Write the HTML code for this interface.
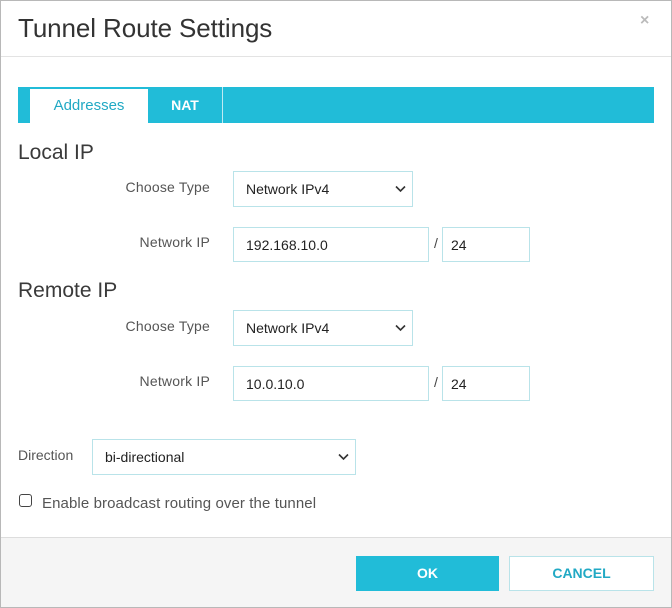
<!DOCTYPE html>
<html><head><style>
*{box-sizing:border-box;margin:0;padding:0}
body{width:672px;height:608px;background:#fff;font-family:"Liberation Sans",sans-serif;position:relative;overflow:hidden}
.frame{position:absolute;left:0;top:0;width:672px;height:608px;border:1px solid #b8b8b8}
.abs{position:absolute}
.title{left:18px;top:13px;font-size:26px;color:#333;font-weight:normal;letter-spacing:-0.1px}
.x{left:640px;top:12px;font-size:16px;color:#bbb;font-weight:bold}
.hr{left:1px;width:670px;height:1px;background:#e3e3e3}
.bar{left:18px;top:87px;width:636px;height:36px;background:#21bcd8}
.tab1{left:30px;top:87px;width:118px;height:36px;background:#fff;border-top:2px solid #21bcd8;color:#21a9c4;font-size:15px;text-align:center;line-height:34px}
.tab2{left:148px;top:87px;width:75px;height:36px;color:#fff;font-size:14px;font-weight:bold;text-align:center;line-height:36px;border-right:1px solid #bfeaf3}
.h{font-size:21px;color:#3a3a3a;left:18px}
.lbl{font-size:14px;color:#555;text-align:right;width:110px;left:100px;letter-spacing:0.2px}
.box{border:1px solid #b9e3e9;background:#fff;font-size:14px;color:#222;padding-left:12px;line-height:34px}
.chev{position:absolute;right:6px;top:13px}
</style></head><body>
<div class="frame"></div>
<div class="abs title">Tunnel Route Settings</div>
<div class="abs x">×</div>
<div class="abs hr" style="top:56px"></div>
<div class="abs bar"></div>
<div class="abs tab1">Addresses</div>
<div class="abs tab2">NAT</div>

<div class="abs h" style="top:141px">Local IP</div>
<div class="abs lbl" style="top:179px">Choose Type</div>
<div class="abs box" style="left:233px;top:171px;width:180px;height:36px">Network IPv4<svg class="chev" width="11" height="8" viewBox="0 0 11 8"><path d="M1 1.5l4.5 4.5 4.5-4.5" stroke="#333" stroke-width="1.6" fill="none"/></svg></div>
<div class="abs lbl" style="top:234px">Network IP</div>
<div class="abs box" style="left:233px;top:227px;width:196px;height:35px">192.168.10.0</div>
<div class="abs" style="left:434px;top:235px;font-size:14px;color:#444">/</div>
<div class="abs box" style="left:442px;top:227px;width:88px;height:35px;padding-left:8px">24</div>

<div class="abs h" style="top:279px">Remote IP</div>
<div class="abs lbl" style="top:318px">Choose Type</div>
<div class="abs box" style="left:233px;top:310px;width:180px;height:36px">Network IPv4<svg class="chev" width="11" height="8" viewBox="0 0 11 8"><path d="M1 1.5l4.5 4.5 4.5-4.5" stroke="#333" stroke-width="1.6" fill="none"/></svg></div>
<div class="abs lbl" style="top:373px">Network IP</div>
<div class="abs box" style="left:233px;top:366px;width:196px;height:35px">10.0.10.0</div>
<div class="abs" style="left:434px;top:374px;font-size:14px;color:#444">/</div>
<div class="abs box" style="left:442px;top:366px;width:88px;height:35px;padding-left:8px">24</div>

<div class="abs" style="left:18px;top:447px;font-size:14px;color:#555">Direction</div>
<div class="abs box" style="left:92px;top:439px;width:264px;height:36px">bi-directional<svg class="chev" width="11" height="8" viewBox="0 0 11 8"><path d="M1 1.5l4.5 4.5 4.5-4.5" stroke="#333" stroke-width="1.6" fill="none"/></svg></div>
<div class="abs" style="left:19px;top:494px;width:13px;height:13px;border:1.5px solid #444;border-radius:3px"></div>
<div class="abs" style="left:42px;top:495px;font-size:15px;color:#555;letter-spacing:0.1px">Enable broadcast routing over the tunnel</div>

<div class="abs" style="left:1px;top:537px;width:670px;height:70px;background:#f5f5f5;border-top:1px solid #ddd"></div>
<div class="abs" style="left:356px;top:556px;width:143px;height:35px;background:#21bcd8;color:#fff;font-weight:bold;font-size:14px;text-align:center;line-height:35px">OK</div>
<div class="abs" style="left:509px;top:556px;width:145px;height:35px;background:#fff;border:1px solid #b9e3e9;color:#21a9c4;font-weight:bold;font-size:14px;text-align:center;line-height:33px">CANCEL</div>
</body></html>
